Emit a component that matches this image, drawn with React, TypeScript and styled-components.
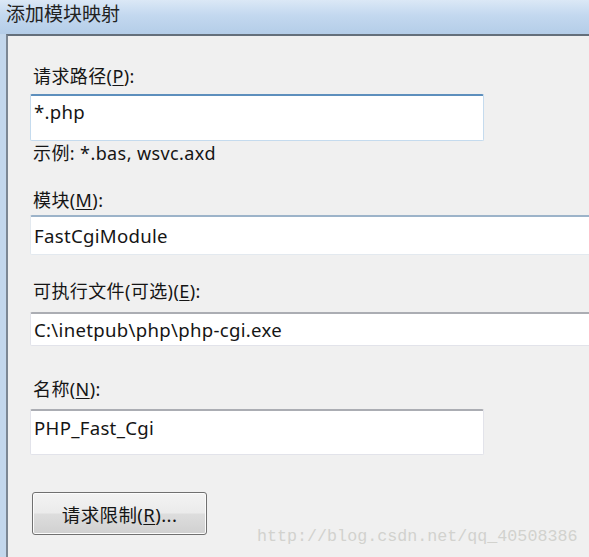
import React from "react";
import styled, { createGlobalStyle } from "styled-components";

const Global = createGlobalStyle`
  html, body { margin: 0; padding: 0; background: #f0f0f0; }
  #root { width: 589px; height: 557px; }
`;

const Window = styled.div`
  position: relative;
  width: 589px;
  height: 557px;
  overflow: hidden;
  display: flex;
  flex-direction: column;
  background: #c3d7ec;
  font-family: "Noto Sans", "Noto Sans CJK SC", sans-serif;
  color: #151515;
`;

const TitleBar = styled.div`
  height: 34px;
  flex: none;
  display: flex;
  align-items: flex-start;
  padding: 2px 0 0 6px;
  box-sizing: border-box;
  background: linear-gradient(180deg, #dbe8f6 0%, #c3d8ef 45%, #b4cde8 100%);
  font-size: 19px;
  line-height: 24px;
  color: #222;
`;

const Frame = styled.div`
  flex: 1;
  display: flex;
  padding-left: 6px;
`;

const Client = styled.div`
  flex: 1;
  background: #f0f0f0;
  border-top: 2px solid #646f7b;
  border-left: 2px solid #7c8793;
  display: flex;
  flex-direction: column;
  padding: 31px 0 0 22px;
  font-size: 18px;
`;

const Label = styled.div<{ $mt?: number }>`
  margin-top: ${(p) => p.$mt ?? 0}px;
  padding-left: 3px;
  height: 18px;
  line-height: 18px;
  white-space: nowrap;
  letter-spacing: 0.4px;
`;

const Key = styled.span`
  text-decoration: underline;
  text-underline-offset: 2px;
`;

type Tone = "focus" | "hover" | "plain";

const toneTop: Record<Tone, string> = {
  focus: "#5d8fbd",
  hover: "#9cb3c9",
  plain: "#abadb3",
};
const toneSide: Record<Tone, string> = {
  focus: "#c5dbee",
  hover: "#e3e9ef",
  plain: "#e2e3ea",
};

const TextBox = styled.div<{ $h: number; $w?: number; $pt: number; $tone: Tone; $mt: number }>`
  margin-top: ${(p) => p.$mt}px;
  height: ${(p) => p.$h}px;
  width: ${(p) => (p.$w ? `${p.$w}px` : "auto")};
  margin-right: ${(p) => (p.$w ? "0" : "-20px")};
  box-sizing: border-box;
  background: #fff;
  border: 1px solid ${(p) => toneSide[p.$tone]};
  border-top: 2px solid ${(p) => toneTop[p.$tone]};
  border-radius: 2px;
  padding: ${(p) => p.$pt}px 0 0 3px;
  line-height: 22px;
  font-size: 18.6px;
  white-space: nowrap;
  letter-spacing: 0.3px;
`;

const Hint = styled.div`
  margin-top: 3px;
  padding-left: 3px;
  line-height: 18px;
  letter-spacing: 0.4px;
`;

const ButtonRow = styled.div`
  margin-top: 37px;
  display: flex;
`;

const Button = styled.button`
  margin-left: 2px;
  width: 175px;
  height: 43px;
  border: 1px solid #707070;
  border-radius: 3px;
  background: linear-gradient(180deg, #f3f3f3 0%, #ebebeb 48%, #dddddd 52%, #d0d0d0 100%);
  box-shadow: inset 0 0 0 1px #fcfcfc;
  font-family: "Noto Sans", "Noto Sans CJK SC", sans-serif;
  font-size: 18.5px;
  color: #151515;
  padding: 0;
  letter-spacing: 0.4px;
`;

const Watermark = styled.div`
  position: absolute;
  left: 257px;
  top: 527px;
  font-family: "Liberation Mono", monospace;
  font-size: 16.7px;
  line-height: 20px;
  color: #d2d2ce;
  white-space: nowrap;
`;

export default function App() {
  return (
    <Window>
      <Global />
      <TitleBar>添加模块映射</TitleBar>
      <Frame>
        <Client>
          <Label>
            请求路径(<Key>P</Key>):
          </Label>
          <TextBox $mt={9} $h={47} $w={454} $pt={5} $tone="focus">
            *.php
          </TextBox>
          <Hint>示例: *.bas, wsvc.axd</Hint>
          <Label $mt={29}>
            模块(<Key>M</Key>):
          </Label>
          <TextBox $mt={6} $h={40} $pt={8} $tone="hover">
            FastCgiModule
          </TextBox>
          <Label $mt={27}>
            可执行文件(可选)(<Key>E</Key>):
          </Label>
          <TextBox $mt={12} $h={34} $pt={5} $tone="plain">
            C:\inetpub\php\php-cgi.exe
          </TextBox>
          <Label $mt={34}>
            名称(<Key>N</Key>):
          </Label>
          <TextBox $mt={11} $h={46} $w={454} $pt={6} $tone="plain">
            PHP_Fast_Cgi
          </TextBox>
          <ButtonRow>
            <Button>
              请求限制(<Key>R</Key>)...
            </Button>
          </ButtonRow>
        </Client>
      </Frame>
      <Watermark>http://blog.csdn.net/qq_40508386</Watermark>
    </Window>
  );
}
